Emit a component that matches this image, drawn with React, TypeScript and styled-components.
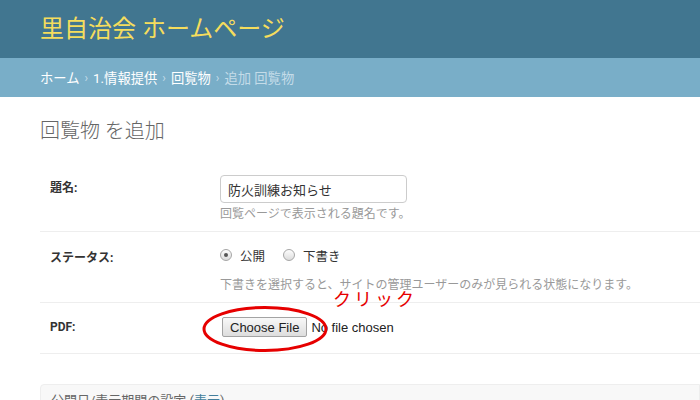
import React from 'react';
import styled, { createGlobalStyle } from 'styled-components';

const GlobalStyle = createGlobalStyle`
  html, body {
    margin: 0;
    padding: 0;
    background: #fff;
  }
  body {
    font-family: Roboto, "Noto Sans CJK JP", sans-serif;
    color: #333;
  }
`;

const Page = styled.div`
  position: relative;
  width: 700px;
  height: 400px;
  overflow: hidden;
`;

const Header = styled.div`
  display: flex;
  align-items: center;
  height: 58px;
  padding: 0 40px;
  background: #417690;
`;

const Branding = styled.h1`
  margin: 0;
  font-size: 24px;
  font-weight: 400;
  line-height: 30px;
  color: #f5dd5d;
`;

const Breadcrumbs = styled.div`
  display: flex;
  align-items: center;
  height: 39px;
  padding: 0 40px;
  background: #79aec8;
  color: #fff;
  font-size: 13.3px;
`;

const Crumb = styled.span<{ current?: boolean }>`
  color: ${(p) => (p.current ? '#c4dce8' : '#fff')};
`;

const Sep = styled.span`
  color: #c4dce8;
  margin: 0 5px;
  font-size: 12px;
`;

const Content = styled.div`
  padding: 22px 0 0 40px;
`;

const Title = styled.h1`
  margin: 0 0 22px;
  font-size: 20px;
  font-weight: 300;
  line-height: 24px;
  color: #666;
`;

const FormRow = styled.div`
  display: flex;
  padding: 10px;
  border-bottom: 1px solid #eee;
`;

const Label = styled.label<{ offset: number }>`
  flex: 0 0 160px;
  padding: ${(p) => p.offset}px 10px 0 0;
  font-size: 12px;
  font-weight: 700;
  line-height: 16px;
  color: #333;
`;

const Field = styled.div`
  display: flex;
  flex-direction: column;
`;

const TextInput = styled.input`
  box-sizing: border-box;
  width: 187px;
  height: 28px;
  padding: 5px 7px;
  border: 1px solid #ccc;
  border-radius: 4px;
  font-family: inherit;
  font-size: 13px;
  color: #333;
  outline: none;
`;

const Help = styled.div<{ gap: number }>`
  margin-top: ${(p) => p.gap}px;
  font-size: 12px;
  line-height: 14px;
  color: #999;
`;

const RadioList = styled.div`
  display: flex;
  gap: 18px;
  margin-top: 5px;
  height: 16px;
`;

const RadioItem = styled.span`
  display: flex;
  align-items: center;
  gap: 8px;
  font-size: 12.5px;
  color: #333;
`;

const RadioDot = styled.span<{ checked?: boolean }>`
  position: relative;
  box-sizing: border-box;
  width: 12px;
  height: 12px;
  border-radius: 50%;
  border: 1px solid #a6a6a6;
  background: linear-gradient(#fdfdfd, #dcdcdc);

  &::after {
    content: '';
    display: ${(p) => (p.checked ? 'block' : 'none')};
    position: absolute;
    left: 3px;
    top: 3px;
    width: 4px;
    height: 4px;
    border-radius: 50%;
    background: #555;
  }
`;

const FileField = styled.div`
  display: flex;
  align-items: center;
  padding: 4px 0 6px 2px;
  font-family: "Liberation Sans", Arial, sans-serif;
  font-size: 13px;
  color: #222;
`;

const FileButton = styled.button`
  box-sizing: border-box;
  height: 20px;
  padding: 0 7px;
  margin-right: 4px;
  border: 1px solid #a3a3a3;
  border-radius: 2px;
  background: linear-gradient(#f8f8f8, #dddddd);
  font-family: inherit;
  font-size: 13px;
  color: #222;
`;

const Collapsed = styled.div`
  margin-top: 30px;
  border: 1px solid #eee;
  border-radius: 4px 0 0 0;
  background: #f8f8f8;
  padding: 8px 10px;
  font-size: 13px;
  line-height: 16px;
  color: #666;
`;

const ToggleLink = styled.span`
  color: #447e9b;
`;

const Ellipse = styled.svg`
  position: absolute;
  left: 200px;
  top: 304px;
`;

const Note = styled.div`
  position: absolute;
  left: 333px;
  top: 291px;
  font-size: 18px;
  line-height: 18px;
  letter-spacing: 3px;
  color: #e60000;
`;

const App: React.FC = () => {
  return (
    <Page>
      <GlobalStyle />
      <Header>
        <Branding>里自治会 ホームページ</Branding>
      </Header>
      <Breadcrumbs>
        <Crumb>ホーム</Crumb>
        <Sep>›</Sep>
        <Crumb>1.情報提供</Crumb>
        <Sep>›</Sep>
        <Crumb>回覧物</Crumb>
        <Sep>›</Sep>
        <Crumb current>追加 回覧物</Crumb>
      </Breadcrumbs>
      <Content>
        <Title>回覧物 を追加</Title>
        <FormRow>
          <Label offset={5}>題名:</Label>
          <Field>
            <TextInput defaultValue="防火訓練お知らせ" />
            <Help gap={4}>回覧ページで表示される題名です。</Help>
          </Field>
        </FormRow>
        <FormRow>
          <Label offset={8}>ステータス:</Label>
          <Field>
            <RadioList>
              <RadioItem>
                <RadioDot checked />
                公開
              </RadioItem>
              <RadioItem>
                <RadioDot />
                下書き
              </RadioItem>
            </RadioList>
            <Help gap={15}>
              下書きを選択すると、サイトの管理ユーザーのみが見られる状態になります。
            </Help>
          </Field>
        </FormRow>
        <FormRow>
          <Label offset={6}>PDF:</Label>
          <FileField>
            <FileButton type="button">Choose File</FileButton>
            No file chosen
          </FileField>
        </FormRow>
        <Collapsed>
          公開日/表示期間の設定 (<ToggleLink>表示</ToggleLink>)
        </Collapsed>
      </Content>
      <Ellipse width="130" height="50" viewBox="0 0 130 50">
        <ellipse cx="65" cy="25" rx="61" ry="21.5" fill="none" stroke="#e60000" strokeWidth="3" />
      </Ellipse>
      <Note>クリック</Note>
    </Page>
  );
};

export default App;
